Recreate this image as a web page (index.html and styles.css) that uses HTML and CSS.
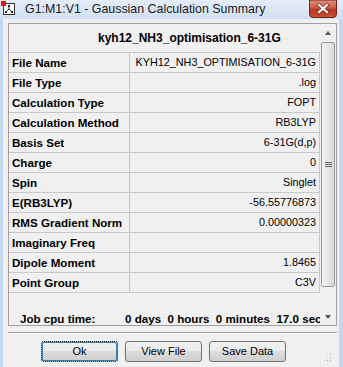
FILE: index.html
```html
<!DOCTYPE html>
<html>
<head>
<meta charset="utf-8">
<link rel="stylesheet" href="styles.css">
</head>
<body>
<div class="window">
  <div class="titlebar">
    <svg class="appicon" width="14" height="14" viewBox="0 0 14 14">
      <rect x="2.5" y="2.5" width="11" height="11" fill="#fff" stroke="#333"/>
      <rect x="0" y="0" width="5" height="5" fill="#e01010"/>
      <line x1="8" y1="5" x2="8" y2="8" stroke="#333"/>
      <line x1="8" y1="8" x2="5" y2="11" stroke="#333"/>
      <line x1="8" y1="8" x2="11" y2="11" stroke="#333"/>
      <rect x="7" y="4" width="2" height="2" fill="#333"/>
      <rect x="4" y="10" width="2" height="2" fill="#333"/>
      <rect x="10" y="10" width="2" height="2" fill="#333"/>
    </svg>
    <span class="title">G1:M1:V1 - Gaussian Calculation Summary</span>
    <svg class="winclose" width="28" height="18" viewBox="0 0 28 18">
      <defs>
        <linearGradient id="cg" x1="0" y1="0" x2="0" y2="1">
          <stop offset="0" stop-color="#e0907e"/>
          <stop offset="0.45" stop-color="#cc5a43"/>
          <stop offset="0.55" stop-color="#b8361f"/>
          <stop offset="1" stop-color="#c84e35"/>
        </linearGradient>
      </defs>
      <path d="M0.5 0 V14 Q0.5 17.5 4 17.5 H24 Q27.5 17.5 27.5 14 V0 Z" fill="url(#cg)" stroke="#6e2418"/>
      <path d="M10 5 L18 12 M18 5 L10 12" stroke="#7a3327" stroke-width="3.6" stroke-linecap="square"/>
      <path d="M10 5 L18 12 M18 5 L10 12" stroke="#fff" stroke-width="2" stroke-linecap="square"/>
    </svg>
  </div>
  <div class="client">
    <div class="frame">
      <div class="content">
        <div class="header">kyh12_NH3_optimisation_6-31G</div>
        <div class="grid">
          <div class="lab">File Name</div><div class="val">KYH12_NH3_OPTIMISATION_6-31G</div>
          <div class="lab">File Type</div><div class="val">.log</div>
          <div class="lab">Calculation Type</div><div class="val">FOPT</div>
          <div class="lab">Calculation Method</div><div class="val">RB3LYP</div>
          <div class="lab">Basis Set</div><div class="val">6-31G(d,p)</div>
          <div class="lab">Charge</div><div class="val">0</div>
          <div class="lab">Spin</div><div class="val">Singlet</div>
          <div class="lab">E(RB3LYP)</div><div class="val">-56.55776873</div>
          <div class="lab">RMS Gradient Norm</div><div class="val">0.00000323</div>
          <div class="lab">Imaginary Freq</div><div class="val"></div>
          <div class="lab">Dipole Moment</div><div class="val">1.8465</div>
          <div class="lab last">Point Group</div><div class="val last">C3V</div>
        </div>
        <div class="cpu"><span class="cpulab">Job cpu time:</span><span>0 days &nbsp;0 hours &nbsp;0 minutes &nbsp;17.0 seconds.</span></div>
      </div>
      <div class="scroll">
        <div class="sbtn"><span class="arrow up"></span></div>
        <div class="thumb"><span class="grip"></span></div>
        <div class="track"></div>
        <div class="sbtn"><span class="arrow down"></span></div>
      </div>
    </div>
    <div class="sep"></div>
    <div class="buttons">
      <button class="btn default">Ok</button>
      <button class="btn">View File</button>
      <button class="btn">Save Data</button>
    </div>
    <div class="sizegrip"></div>
  </div>
</div>
</body>
</html>
```
FILE: styles.css
```css
* { box-sizing: border-box; }
body { margin: 0; background: #c4d9ef; }
.window {
  width: 343px; height: 367px; overflow: hidden;
  background: #c2d8f0;
  font-family: "Liberation Sans", Arial, sans-serif;
  color: #000;
}
.titlebar {
  height: 19px; display: flex; align-items: center;
  background: linear-gradient(#e4edf8, #d0e0f2);
  position: relative;
}
.appicon { margin-left: 1px; margin-top: -3px; }
.title { margin-left: 10px; font-size: 12.4px; color: #1a1a1a; margin-top: -2px; }
.winclose { position: absolute; left: 309px; top: 0; }
.client {
  margin-left: 3px; width: 336px; height: 348px;
  background: #f0f0f0; padding: 4px 0 0 5px; position: relative;
}
.frame {
  width: 329px; height: 303px;
  border: 1px solid #a0a0a0;
  display: flex;
}
.content { width: 311px; display: flex; flex-direction: column; overflow: hidden; }
.header {
  height: 28px; line-height: 29px; font-weight: bold; font-size: 12px;
  padding-left: 89px; white-space: nowrap;
}
.grid { display: grid; grid-template-columns: 121px 190px; }
.lab, .val {
  height: 20px; line-height: 19px; border-top: 1px solid #c8c8c8;
  white-space: nowrap; overflow: hidden;
}
.lab { font-weight: bold; font-size: 11.6px; padding-left: 3px; border-right: 1px solid #c8c8c8; }
.val { font-size: 10.8px; text-align: right; padding-right: 3px; border-right: 1px solid #c8c8c8; }
.last { height: 21px; border-bottom: 1px solid #c8c8c8; }
.cpu {
  margin-top: auto; height: 16px; padding-top: 4px; line-height: 12px;
  font-weight: bold; font-size: 11.6px; white-space: nowrap;
  padding-left: 11px; overflow: hidden;
}
.cpulab { display: inline-block; width: 105px; }
.scroll {
  width: 16px; display: flex; flex-direction: column; background: #f0f0f0;
}
.sbtn { height: 17px; display: flex; align-items: center; justify-content: center; }
.arrow { width: 0; height: 0; border-left: 3.5px solid transparent; border-right: 3.5px solid transparent; }
.arrow.up { border-bottom: 4px solid #555; }
.arrow.down { border-top: 4px solid #555; }
.thumb {
  height: 245px; margin: 1px 1px 0 1px;
  border: 1px solid #9a9a9a; border-radius: 2px;
  background: linear-gradient(90deg, #f3f3f3, #e6e6e6 50%, #d8d8d8);
  display: flex; align-items: center; justify-content: center;
}
.grip {
  width: 7px; height: 5px;
  background: repeating-linear-gradient(#6a6a6a 0 1px, transparent 1px 2px);
}
.track { flex: 1; }
.sep {
  width: 329px; margin-top: 6px;
  border-top: 1px solid #a0a0a0; border-bottom: 1px solid #fff;
}
.buttons { display: flex; gap: 7px; padding-left: 33px; margin-top: 7px; }
.btn {
  width: 77px; height: 21px; padding: 0 0 1px;
  font-family: "Liberation Sans", Arial, sans-serif; font-size: 11px; color: #000;
  border: 1px solid #707070; border-radius: 3px;
  background: linear-gradient(#f2f2f2, #ebebeb 50%, #dddddd 50%, #cfcfcf);
}
.btn.default { border: 1px dotted #000; box-shadow: inset 0 0 0 1px #3c7fb1; }
.sizegrip {
  position: absolute; right: 7px; bottom: 5px; width: 9px; height: 9px;
  background:
    radial-gradient(circle, #a0a0a0 0.8px, transparent 1px) 0 0 / 3px 3px;
  clip-path: polygon(100% 0, 100% 100%, 0 100%);
}
```
